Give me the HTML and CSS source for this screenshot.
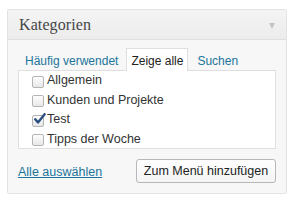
FILE: index.html
```html
<!DOCTYPE html>
<html lang="de">
  <head>
    <meta charset="UTF-8" />
    <title>Kategorien</title>
    <link rel="stylesheet" href="styles.css">
  </head>
  <body>
    <div class="postbox">
      <!-- Kopfzeile -->
      <div class="postbox__header">
        <h3 class="postbox__title">Kategorien</h3>
        <span class="postbox__toggle"></span>
      </div>

      <div class="postbox__inside">
        <!-- Reiter -->
        <ul class="tabs">
          <li class="tabs__item"><a href="#">Häufig verwendet</a></li>
          <li class="tabs__item tabs__item--active">Zeige alle</li>
          <li class="tabs__item"><a href="#">Suchen</a></li>
        </ul>

        <!-- Kategorienliste -->
        <ul class="checklist">
          <li class="checklist__item"><span class="check"></span>Allgemein</li>
          <li class="checklist__item"><span class="check"></span>Kunden und Projekte</li>
          <li class="checklist__item">
            <span class="check check--on">
              <svg width="13" height="12" viewBox="0 0 13 12"><path d="M2.2 6.3 L5 9.4 L11.6 1.2" fill="none" stroke="#2a4f80" stroke-width="2.4" stroke-linecap="round" stroke-linejoin="round"/></svg>
            </span>Test
          </li>
          <li class="checklist__item"><span class="check"></span>Tipps der Woche</li>
        </ul>

        <div class="actions">
          <a href="#" class="actions__select">Alle auswählen</a>
          <button class="button">Zum Menü hinzufügen</button>
        </div>
      </div>
    </div>
  </body>
</html>
```

FILE: styles.css
```css
body {
  margin: 0;
  padding: 9px 0 0 7px;
  background: #fff;
  font-family: "Liberation Sans", Arial, sans-serif;
  font-size: 12px;
  color: #333;
}

.postbox {
  width: 278px;
  height: 183px;
  border: 1px solid #e3e3e3;
  background: #f7f7f7;
  border-radius: 2px;
}

.postbox__header {
  display: flex;
  align-items: center;
  justify-content: space-between;
  height: 29px;
  border-bottom: 1px solid #dfdfdf;
  background: linear-gradient(#f4f4f4, #ececec);
  padding: 0 11px 0 11px;
}

.postbox__title {
  margin: 0;
  font-family: "Liberation Serif", Georgia, serif;
  font-weight: normal;
  font-size: 16px;
  letter-spacing: 0.1px;
  color: #464646;
  padding-top: 1px;
}

.postbox__toggle {
  width: 0;
  height: 0;
  border-left: 3.5px solid transparent;
  border-right: 3.5px solid transparent;
  border-top: 6px solid #c4c4c4;
  margin-top: 2px;
}

.postbox__inside {
  padding: 8px 10px 0 10px;
}

.tabs {
  list-style: none;
  margin: 0 0 -1px 0;
  padding: 0 0 0 6px;
  display: flex;
  position: relative;
}

.tabs__item {
  padding-top: 4px;
  height: 18px;
  line-height: 16px;
  font-size: 12px;
  border: 1px solid transparent;
  border-bottom: none;
}

.tabs__item a {
  color: #21759b;
  text-decoration: none;
}

.tabs__item--active {
  margin: 0 8px 0 7px;
  padding: 4px 4px 0 4px;
  background: #fff;
  border-color: #dfdfdf;
  color: #222;
}

.checklist {
  list-style: none;
  margin: 0;
  padding: 0 0 0 13px;
  height: 77px;
  background: #fff;
  border: 1px solid #dfdfdf;
}

.checklist__item {
  display: flex;
  align-items: center;
  height: 19.5px;
  padding-bottom: 1px;
  box-sizing: border-box;
  font-size: 12.5px;
}

.check {
  position: relative;
  box-sizing: border-box;
  width: 12px;
  height: 12px;
  margin: 3px 3px 0 0;
  border: 1px solid #b4b4b4;
  border-radius: 2px;
  background: linear-gradient(#fdfdfd, #e8e8e8);
}

.check svg {
  position: absolute;
  left: 0;
  top: -3px;
}

.actions {
  display: flex;
  align-items: center;
  justify-content: space-between;
  margin-top: 10px;
}

.actions__select {
  color: #21759b;
  text-decoration: underline;
  font-size: 12.5px;
  margin-top: 2px;
}

.button {
  width: 140px;
  height: 24px;
  padding: 0;
  font-family: "Liberation Sans", Arial, sans-serif;
  font-size: 12.5px;
  color: #222;
  background: linear-gradient(#fefefe, #f4f4f4);
  border: 1px solid #b8b8b8;
  border-radius: 3px;
  cursor: pointer;
}
```
